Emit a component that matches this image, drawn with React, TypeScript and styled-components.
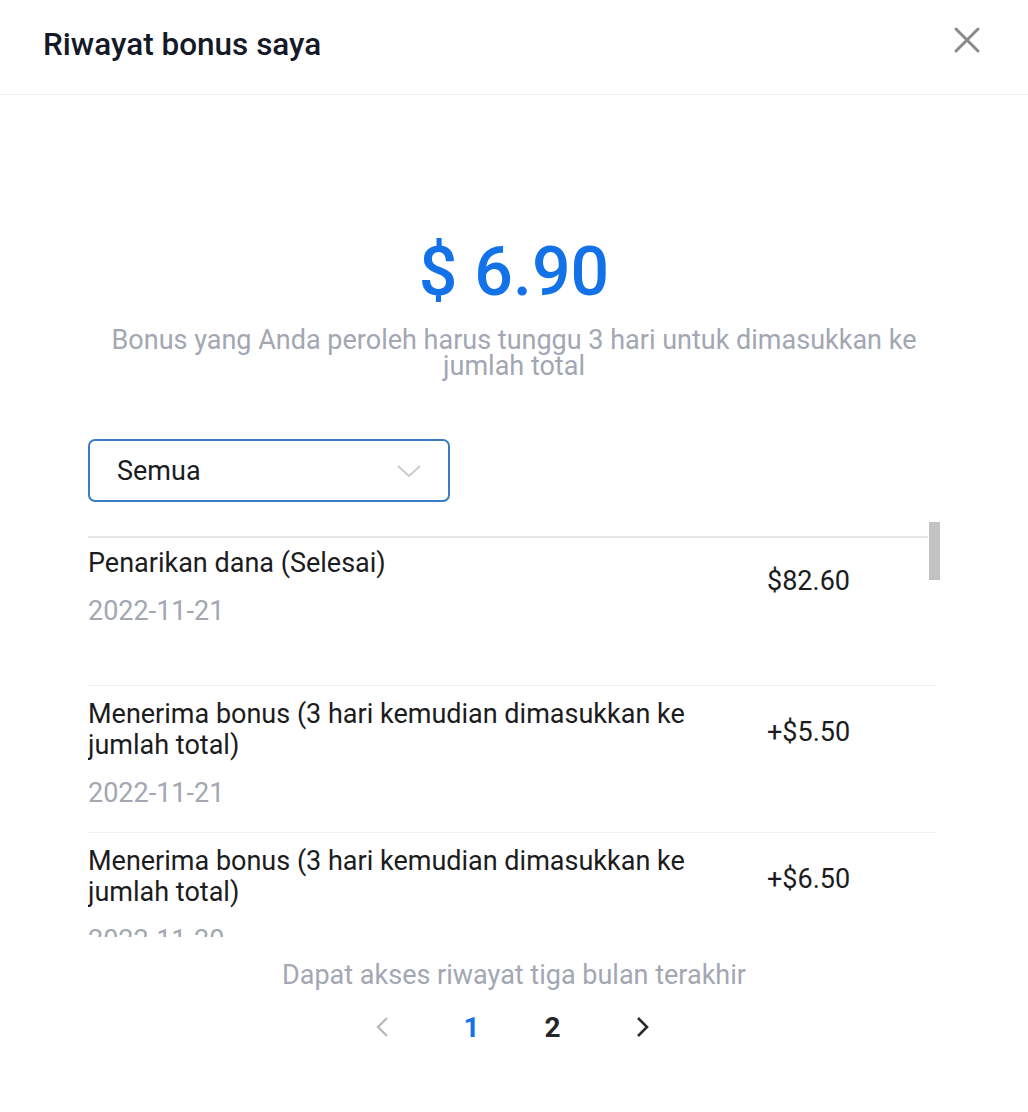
import React from "react";
import styled, { createGlobalStyle } from "styled-components";

const Global = createGlobalStyle`
  html, body { margin: 0; padding: 0; background: #fff; }
  body { font-family: Roboto, "Noto Sans", "Liberation Sans", sans-serif; }
  * { box-sizing: border-box; }
`;

const Page = styled.div`
  width: 1028px;
  height: 1112px;
  background: #fff;
  display: flex;
  flex-direction: column;
  overflow: hidden;
`;

const Header = styled.header`
  height: 95px;
  border-bottom: 1px solid #eeeff1;
  display: flex;
  align-items: center;
  justify-content: space-between;
  padding: 0 46px 6px 43px;
`;

const Title = styled.h1`
  margin: 0;
  font-size: 31.5px;
  font-weight: 500;
  color: #151a28;
  letter-spacing: 0;
`;

const CloseButton = styled.button`
  border: 0;
  background: none;
  padding: 0;
  width: 30px;
  height: 30px;
  display: flex;
  align-items: center;
  justify-content: center;
  margin-top: -8px;
`;

const Main = styled.main`
  display: flex;
  flex-direction: column;
  padding: 0 88px;
`;

const Amount = styled.div`
  margin-top: 141px;
  text-align: center;
  font-size: 68px;
  line-height: 72px;
  font-weight: 500;
  color: #1372e8;
`;

const Note = styled.p`
  margin: 19px 0 0;
  text-align: center;
  font-size: 27px;
  line-height: 26px;
  color: #a2a7b3;
`;

const Select = styled.div`
  margin-top: 60px;
  width: 362px;
  height: 63px;
  border: 2px solid #3b7cc6;
  border-radius: 7px;
  display: flex;
  align-items: center;
  justify-content: space-between;
  padding: 0 26px 0 27px;
  font-size: 27px;
  color: #1b1b1f;
`;

const ScrollArea = styled.div`
  position: relative;
  margin-top: 17px;
  height: 418px;
  overflow: hidden;
  padding-right: 3px;
`;

const List = styled.div`
  padding-top: 17px;
`;

const TopRule = styled.div`
  height: 2px;
  background: #e4e5e8;
  margin-right: 9px;
`;

const Row = styled.div<{ $first?: boolean }>`
  display: flex;
  justify-content: space-between;
  min-height: 147px;
  padding: ${(p) => (p.$first ? "10px" : "13px")} 0 22px;
  border-top: ${(p) => (p.$first ? "0" : "1px solid #f0f1f3")};
`;

const Info = styled.div`
  width: 625px;
  display: flex;
  flex-direction: column;
`;

const RowTitle = styled.div`
  font-size: 27px;
  line-height: 31px;
  color: #1c1c1e;
`;

const RowDate = styled.div`
  margin-top: 17px;
  font-size: 27px;
  line-height: 31px;
  color: #a2a7b2;
`;

const RowAmount = styled.div`
  width: 170px;
  margin-top: 18px;
  font-size: 27px;
  line-height: 31px;
  color: #1c1c1e;
`;

const Thumb = styled.div`
  position: absolute;
  right: 0;
  top: 3px;
  width: 11px;
  height: 58px;
  background: #c3c3c5;
`;

const Footer = styled.div`
  display: flex;
  flex-direction: column;
  align-items: center;
  margin-top: 24px;
`;

const FooterNote = styled.div`
  font-size: 27px;
  line-height: 28px;
  color: #a2a7b3;
`;

const Pager = styled.nav`
  margin-top: 18px;
  margin-right: 4px;
  display: flex;
  align-items: center;
  gap: 45px;
`;

const PageItem = styled.div<{ $color: string; $arrow?: boolean }>`
  width: ${(p) => (p.$arrow ? "54px" : "36px")};
  height: 40px;
  display: flex;
  align-items: center;
  justify-content: center;
  font-size: 28px;
  font-weight: 700;
  color: ${(p) => p.$color};
`;

type Entry = { title: string; date: string; amount: string };

const entries: Entry[] = [
  { title: "Penarikan dana (Selesai)", date: "2022-11-21", amount: "$82.60" },
  {
    title: "Menerima bonus (3 hari kemudian dimasukkan ke jumlah total)",
    date: "2022-11-21",
    amount: "+$5.50",
  },
  {
    title: "Menerima bonus (3 hari kemudian dimasukkan ke jumlah total)",
    date: "2022-11-20",
    amount: "+$6.50",
  },
];

export default function App() {
  return (
    <Page>
      <Global />
      <Header>
        <Title>Riwayat bonus saya</Title>
        <CloseButton aria-label="close">
          <svg width="26" height="26" viewBox="0 0 26 26">
            <path d="M2 2 L24 24 M24 2 L2 24" stroke="#8a8a8c" strokeWidth="3" strokeLinecap="round" />
          </svg>
        </CloseButton>
      </Header>
      <Main>
        <Amount>$ 6.90</Amount>
        <Note>Bonus yang Anda peroleh harus tunggu 3 hari untuk dimasukkan ke jumlah total</Note>
        <Select>
          <span>Semua</span>
          <svg width="26" height="16" viewBox="0 0 26 16">
            <path d="M2 3 L13 13 L24 3" stroke="#c9cacd" strokeWidth="1.8" fill="none" />
          </svg>
        </Select>
        <ScrollArea>
          <List>
            <TopRule />
            {entries.map((e, i) => (
              <Row key={i} $first={i === 0}>
                <Info>
                  <RowTitle>{e.title}</RowTitle>
                  <RowDate>{e.date}</RowDate>
                </Info>
                <RowAmount>{e.amount}</RowAmount>
              </Row>
            ))}
          </List>
          <Thumb />
        </ScrollArea>
      </Main>
      <Footer>
        <FooterNote>Dapat akses riwayat tiga bulan terakhir</FooterNote>
        <Pager>
          <PageItem $color="#b5b7bb" $arrow>
            <svg width="16" height="24" viewBox="0 0 16 24">
              <path d="M13 3 L4 12 L13 21" stroke="#b8babe" strokeWidth="2.4" fill="none" />
            </svg>
          </PageItem>
          <PageItem $color="#1372e8">1</PageItem>
          <PageItem $color="#252628">2</PageItem>
          <PageItem $color="#252628" $arrow>
            <svg width="16" height="24" viewBox="0 0 16 24">
              <path d="M3 3 L12 12 L3 21" stroke="#2a2b2e" strokeWidth="2.6" fill="none" />
            </svg>
          </PageItem>
        </Pager>
      </Footer>
    </Page>
  );
}
